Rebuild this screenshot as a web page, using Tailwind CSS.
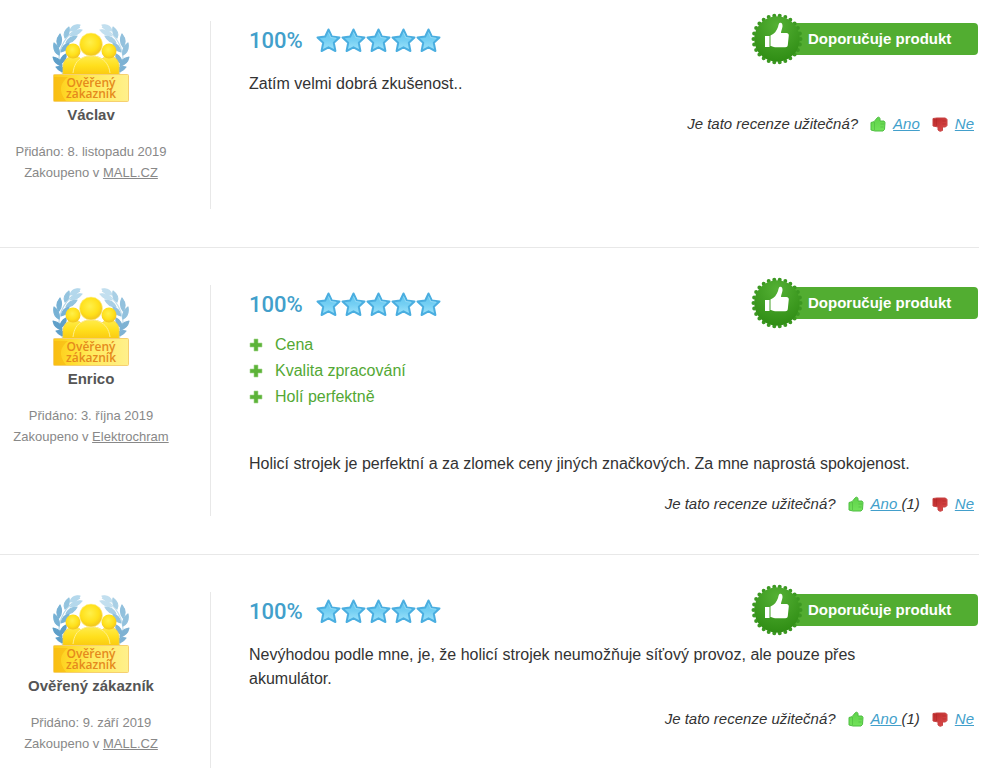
<!DOCTYPE html>
<html lang="cs">
<head>
  <meta charset="UTF-8" />
  <meta name="viewport" content="width=device-width, initial-scale=1.0"/>
  <title>Recenze produktu</title>
  <script src="https://cdn.jsdelivr.net/npm/@tailwindcss/browser@4"></script>
</head>
<body class="bg-white font-['Liberation_Sans',Arial,sans-serif] text-[#333]">

  <!-- Sdílené ikony -->
  <svg class="absolute size-0" aria-hidden="true">
    <defs>
      <linearGradient id="gold" x1="0" y1="0" x2="0" y2="1">
        <stop offset="0" stop-color="#ffec4a"/><stop offset=".5" stop-color="#ffdf1c"/><stop offset="1" stop-color="#f9c610"/>
      </linearGradient>
      <radialGradient id="head" cx=".45" cy=".4" r=".6">
        <stop offset="0" stop-color="#fff04a"/><stop offset=".65" stop-color="#ffe01a"/><stop offset="1" stop-color="#f2c41e"/>
      </radialGradient>
      <linearGradient id="plate" x1="0" y1="0" x2="1" y2="0">
        <stop offset="0" stop-color="#fdcb1a"/><stop offset=".25" stop-color="#ffdd2e"/><stop offset=".5" stop-color="#ffea5c"/><stop offset="1" stop-color="#fff08c"/>
      </linearGradient>
      <linearGradient id="star-fill" x1="0" y1="0" x2="0" y2="1">
        <stop offset="0" stop-color="#5fc4ee"/><stop offset=".5" stop-color="#74cff3"/><stop offset="1" stop-color="#a0e4fb"/>
      </linearGradient>
      <radialGradient id="seal-fill" cx=".5" cy=".2" r=".8">
        <stop offset="0" stop-color="#54b034"/><stop offset="1" stop-color="#2f8d14"/>
      </radialGradient>
      <linearGradient id="yes-fill" x1="0" y1="0" x2="0" y2="1">
        <stop offset="0" stop-color="#5fd24a"/><stop offset="1" stop-color="#72e25a"/>
      </linearGradient>
      <linearGradient id="no-fill" x1="0" y1="0" x2="1" y2="1">
        <stop offset="0" stop-color="#b82626"/><stop offset="1" stop-color="#e05050"/>
      </linearGradient>

      <g id="laurel" stroke-width="1.200" stroke-linejoin="round">
        <path d="M28 4C14 11 6 25 7 40c1 7 3 11 6 14" fill="none" stroke="#b5d7e9"/>
        <path fill="#b4d8ec" stroke="#b4d8ec" d="M28 2c-6-1-9 2-10 6 5 0 8-2 10-6zM30 7c-6-1-9 1-12 6 6 0 9-2 12-6z"/>
        <path fill="#94c4df" stroke="#94c4df" d="M17 4c-4 3-6 7-4 11 4-3 5-6 4-11zM25 13c-5 0-9 2-11 7 6 0 9-3 11-7z"/>
        <path fill="#78b2d5" stroke="#78b2d5" d="M8 11c-4 5-4 9-1 13 3-4 3-9 1-13zM17 20c-5 1-7 4-8 9 5-1 8-4 8-9zM2 20c-1 6 1 10 5 12 1-5-1-9-5-12z"/>
        <path fill="#5e9fc9" stroke="#5e9fc9" d="M14 31c-4 2-6 5-6 10 4-2 7-6 6-10zM1 34c1 5 4 8 9 9 0-5-4-8-9-9zM4 44c3 4 6 6 11 5-2-4-6-6-11-5z"/>
      </g>
      <symbol id="verified" viewBox="0 0 78 80">
        <use href="#laurel"/>
        <use href="#laurel" transform="matrix(-1 0 0 1 78 0)" opacity=".8"/>
        <path fill="url(#gold)" stroke="#f6cf3c" stroke-width=".8" d="M11 53V44c0-5 3-9 7-10h7c2 0 3 1 4 2 5-4 16-4 21 0 1-1 2-2 4-2h7c4 1 6 5 6 10v9z"/>
        <path fill="none" stroke="#fff08c" stroke-width="1" d="M21 50c1-8 4-13 9-15 5-3 13-3 18 0 5 2 9 7 10 15"/>
        <circle cx="21" cy="28" r="7.500" fill="url(#head)"/>
        <circle cx="57" cy="28" r="7.500" fill="url(#head)"/>
        <circle cx="39" cy="21.500" r="11.500" fill="url(#head)" stroke="#fff3a0" stroke-width=".6"/>
        <rect x="1.500" y="51.500" width="75" height="27" rx="1" fill="url(#plate)" stroke="#f6d070"/>
        <path d="M2 78V54h14C8 60 6 68 14 78z" fill="#f6b20c" opacity=".5"/>
        <g font-family="Open Sans, sans-serif" font-size="12" font-weight="600" text-anchor="middle" fill="#e58a1c">
          <text x="39" y="64">Ověřený</text>
          <text x="39" y="75">zákazník</text>
        </g>
      </symbol>
      <symbol id="star" viewBox="0 0 25 25">
        <path d="M12.500 1.500l3.300 7 7.700.9-5.700 5.300 1.600 8.300-6.900-3.700L5.600 23l1.600-8.300L1.500 9.400l7.700-.9z" fill="url(#star-fill)" stroke="#4aaee0" stroke-width="2" stroke-linejoin="round"/>
        <path d="M12.500 4.500l2.300 5 5.200.7" fill="none" stroke="#a6e2f8" stroke-width=".7"/>
      </symbol>
      <symbol id="seal" viewBox="0 0 52 52">
        <circle cx="26" cy="26" r="23.500" fill="none" stroke="#3c9822" stroke-width="4" stroke-linecap="round" pathLength="26" stroke-dasharray="0 1"/>
        <circle cx="26" cy="26" r="22.800" fill="url(#seal-fill)"/>
        <path fill="#fff" d="M14 23h4.500v11H14zM19.500 22.500c4-1.500 6-4.500 7.500-8.500.6-2 .7-3.500 1.500-4 2-.8 3.300.8 3 3.500-.3 2.500-1.500 4.500-1.500 6.500h5.500c1.500 0 2.300 1 2.300 2.300l-1 9.700c-.2 1.500-1 2.200-2.500 2.200H24c-1.500 0-2.500-.9-4.500-1.200z"/>
      </symbol>
      <symbol id="yes" viewBox="0 0 16 16">
        <path d="M1 6.500l3-.8L7.500 1.500C9 .6 10.500 1.500 10 5h4l1 1.500-.5 7L13 15H5l-4-1z" fill="url(#yes-fill)" stroke="#4fbe42" stroke-linejoin="round"/>
        <path d="M4.500 6v8M10.500 8H14M10.500 11h3" stroke="#4cb53e" stroke-width=".6"/>
      </symbol>
      <symbol id="no" viewBox="0 0 16 16">
        <path d="M1 2.500L5 2h8.500L15 3.500v6L13.500 11h-3v3.500l-2.500.8-2-1.300v-3L1 10z" fill="url(#no-fill)" stroke="#c84444" stroke-linejoin="round"/>
        <path d="M4.500 2.500v7.500M10.500 5H14M10.500 8H14" stroke="#b02828" stroke-width=".6"/>
      </symbol>
      <symbol id="plus" viewBox="0 0 14 14">
        <path d="M5 1h4v4h4v4H9v4H5V9H1V5h4z" fill="#5cb338" stroke="#a5d78f" stroke-width=".6"/>
      </symbol>
    </defs>
  </svg>

  <main class="mr-[14px]">

    <article class="flex border-b border-[#e8e8e8] pt-[21px] pb-[38px]">
      <aside class="min-h-[188px] w-[211px] shrink-0 border-r border-[#e8e8e8] pt-[2px] pr-[28px] text-center">
        <svg class="mx-auto h-[80px] w-[78px]" role="img" aria-label="Ověřený zákazník"><use href="#verified"/></svg>
        <h3 class="text-[15px] leading-6 font-bold text-[#555]">Václav</h3>
        <p class="mt-[14px] text-[13px] leading-[21px] text-[#888]">Přidáno: 8. listopadu 2019<br/>Zakoupeno v <a href="#" class="underline">MALL.CZ</a></p>
      </aside>
      <div class="flex-1 pl-[38px]">
        <header class="flex h-[47px] items-start justify-between">
          <div class="flex h-[38px] items-center gap-[13px]">
            <strong class="font-[Roboto,sans-serif] text-[22px] font-medium text-[#429fcb]">100%</strong>
            <span class="flex" role="img" aria-label="5 z 5 hvězdiček">
              <svg class="size-[25px]"><use href="#star"/></svg>
              <svg class="size-[25px]"><use href="#star"/></svg>
              <svg class="size-[25px]"><use href="#star"/></svg>
              <svg class="size-[25px]"><use href="#star"/></svg>
              <svg class="size-[25px]"><use href="#star"/></svg>
            </span>
          </div>
          <div class="relative mt-[2px] mr-px w-[202px] rounded bg-[#52ad31] pl-8 text-[15px] leading-8 font-bold text-white">
            <svg class="absolute -top-[10px] -left-[25px] size-[52px]" aria-hidden="true"><use href="#seal"/></svg>
            Doporučuje produkt
          </div>
        </header>
        <p class="mt-1 leading-6">Zatím velmi dobrá zkušenost..</p>
        <div class="mt-4 mr-[5px] flex items-center justify-end text-[15px] leading-6 italic">
          <span>Je tato recenze užitečná?</span>
          <svg class="ml-3 size-4" aria-hidden="true"><use href="#yes"/></svg>
          <a href="#" class="ml-[7px] text-[#429fcb] underline">Ano</a>
          <svg class="ml-3 size-4" aria-hidden="true"><use href="#no"/></svg>
          <a href="#" class="ml-[7px] text-[#429fcb] underline">Ne</a>
        </div>
      </div>
    </article>

    <article class="flex border-b border-[#e8e8e8] pt-[37px] pb-[38px]">
      <aside class="min-h-[188px] w-[211px] shrink-0 border-r border-[#e8e8e8] pt-[2px] pr-[28px] text-center">
        <svg class="mx-auto h-[80px] w-[78px]" role="img" aria-label="Ověřený zákazník"><use href="#verified"/></svg>
        <h3 class="text-[15px] leading-6 font-bold text-[#555]">Enrico</h3>
        <p class="mt-[14px] text-[13px] leading-[21px] text-[#888]">Přidáno: 3. října 2019<br/>Zakoupeno v <a href="#" class="underline">Elektrochram</a></p>
      </aside>
      <div class="flex-1 pl-[38px]">
        <header class="flex h-[47px] items-start justify-between">
          <div class="flex h-[38px] items-center gap-[13px]">
            <strong class="font-[Roboto,sans-serif] text-[22px] font-medium text-[#429fcb]">100%</strong>
            <span class="flex" role="img" aria-label="5 z 5 hvězdiček">
              <svg class="size-[25px]"><use href="#star"/></svg>
              <svg class="size-[25px]"><use href="#star"/></svg>
              <svg class="size-[25px]"><use href="#star"/></svg>
              <svg class="size-[25px]"><use href="#star"/></svg>
              <svg class="size-[25px]"><use href="#star"/></svg>
            </span>
          </div>
          <div class="relative mt-[2px] mr-px w-[202px] rounded bg-[#52ad31] pl-8 text-[15px] leading-8 font-bold text-white">
            <svg class="absolute -top-[10px] -left-[25px] size-[52px]" aria-hidden="true"><use href="#seal"/></svg>
            Doporučuje produkt
          </div>
        </header>
        <ul class="mb-[42px] leading-[26px] text-[#53a834]">
          <li class="flex items-center gap-3"><svg class="size-[14px]" aria-hidden="true"><use href="#plus"/></svg>Cena</li>
          <li class="flex items-center gap-3"><svg class="size-[14px]" aria-hidden="true"><use href="#plus"/></svg>Kvalita zpracování</li>
          <li class="flex items-center gap-3"><svg class="size-[14px]" aria-hidden="true"><use href="#plus"/></svg>Holí perfektně</li>
        </ul>
        <p class="leading-6">Holicí strojek je perfektní a za zlomek ceny jiných značkových. Za mne naprostá spokojenost.</p>
        <div class="mt-4 mr-[5px] flex items-center justify-end text-[15px] leading-6 italic">
          <span>Je tato recenze užitečná?</span>
          <svg class="ml-3 size-4" aria-hidden="true"><use href="#yes"/></svg>
          <span class="ml-[7px]"><a href="#" class="whitespace-pre text-[#429fcb] underline">Ano </a>(1)</span>
          <svg class="ml-3 size-4" aria-hidden="true"><use href="#no"/></svg>
          <a href="#" class="ml-[7px] text-[#429fcb] underline">Ne</a>
        </div>
      </div>
    </article>

    <article class="flex pt-[37px]">
      <aside class="min-h-[188px] w-[211px] shrink-0 border-r border-[#e8e8e8] pt-[2px] pr-[28px] text-center">
        <svg class="mx-auto h-[80px] w-[78px]" role="img" aria-label="Ověřený zákazník"><use href="#verified"/></svg>
        <h3 class="text-[15px] leading-6 font-bold text-[#555]">Ověřený zákazník</h3>
        <p class="mt-[14px] text-[13px] leading-[21px] text-[#888]">Přidáno: 9. září 2019<br/>Zakoupeno v <a href="#" class="underline">MALL.CZ</a></p>
      </aside>
      <div class="flex-1 pl-[38px]">
        <header class="flex h-[47px] items-start justify-between">
          <div class="flex h-[38px] items-center gap-[13px]">
            <strong class="font-[Roboto,sans-serif] text-[22px] font-medium text-[#429fcb]">100%</strong>
            <span class="flex" role="img" aria-label="5 z 5 hvězdiček">
              <svg class="size-[25px]"><use href="#star"/></svg>
              <svg class="size-[25px]"><use href="#star"/></svg>
              <svg class="size-[25px]"><use href="#star"/></svg>
              <svg class="size-[25px]"><use href="#star"/></svg>
              <svg class="size-[25px]"><use href="#star"/></svg>
            </span>
          </div>
          <div class="relative mt-[2px] mr-px w-[202px] rounded bg-[#52ad31] pl-8 text-[15px] leading-8 font-bold text-white">
            <svg class="absolute -top-[10px] -left-[25px] size-[52px]" aria-hidden="true"><use href="#seal"/></svg>
            Doporučuje produkt
          </div>
        </header>
        <p class="mt-1 max-w-[680px] leading-6">Nevýhodou podle mne, je, že holicí strojek neumožňuje síťový provoz, ale pouze přes akumulátor.</p>
        <div class="mt-4 mr-[5px] flex items-center justify-end text-[15px] leading-6 italic">
          <span>Je tato recenze užitečná?</span>
          <svg class="ml-3 size-4" aria-hidden="true"><use href="#yes"/></svg>
          <span class="ml-[7px]"><a href="#" class="whitespace-pre text-[#429fcb] underline">Ano </a>(1)</span>
          <svg class="ml-3 size-4" aria-hidden="true"><use href="#no"/></svg>
          <a href="#" class="ml-[7px] text-[#429fcb] underline">Ne</a>
        </div>
      </div>
    </article>

  </main>
</body>
</html>
